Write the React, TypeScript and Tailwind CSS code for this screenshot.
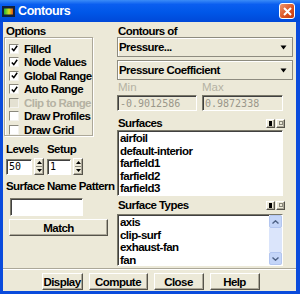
import React from 'react';

const sunken =
  'border border-t-[#7a7869] border-l-[#7a7869] border-b-white border-r-white shadow-[inset_1px_1px_0_#404040]';
const raised =
  'bg-[#ece9d8] border border-t-white border-l-white border-b-[#55534a] border-r-[#55534a] shadow-[inset_-1px_-1px_0_#aca899]';
const mono = "font-['DejaVu_Sans_Mono',monospace] font-normal tracking-normal text-[10px]";

function Check({ label, checked, disabled }: { label: string; checked?: boolean; disabled?: boolean }) {
  return (
    <div className="flex items-center h-[13.5px]">
      <span
        className={`w-[10px] h-[10px] flex items-center justify-center border border-t-[#8a887c] border-l-[#8a887c] border-b-[#f4f3ee] border-r-[#f4f3ee] ${
          disabled ? 'bg-[#e4e1d2]' : 'bg-white'
        }`}
      >
        {checked && (
          <svg width="7" height="7" viewBox="0 0 7 7">
            <path d="M0.8 3.4 L2.8 5.6 L6.2 0.8" stroke="#000" strokeWidth="1.5" fill="none" />
          </svg>
        )}
      </span>
      <span className={`ml-[5px] leading-[12px] ${disabled ? 'text-[#b5b2a3]' : ''}`}>{label}</span>
    </div>
  );
}

function Spinner() {
  return (
    <div className={`w-[10px] h-[17px] flex flex-col items-center justify-between py-[2px] ${raised}`}>
      <svg width="5" height="3" viewBox="0 0 5 3">
        <path d="M0 3 L2.5 0 L5 3 Z" fill="#000" />
      </svg>
      <span className="w-[6px] h-px bg-[#8a887c]" />
      <svg width="5" height="3" viewBox="0 0 5 3">
        <path d="M0 0 L2.5 3 L5 0 Z" fill="#000" />
      </svg>
    </div>
  );
}

function Dropdown({ value }: { value: string }) {
  return (
    <div className="h-[20px] flex items-center bg-[#ece9d8] border border-[#8d8b7f] shadow-[inset_1px_1px_0_#fff]">
      <span className="pl-[1px] flex-1 leading-[12px]">{value}</span>
      <svg width="7" height="6" viewBox="0 0 7 6" className="mr-[5px] mt-[2px]">
        <path d="M0.5 0.5 L6.5 0.5 L3.5 4.5 Z" fill="#000" />
      </svg>
    </div>
  );
}

function ListHeader({ label }: { label: string }) {
  return (
    <div className="flex items-center h-[12px] pl-[1px] pr-[8px]">
      <span className="flex-1 leading-[12px]">{label}</span>
      <span className={`w-[9px] h-[9px] flex items-center justify-center ${raised}`}>
        <span className="w-[3px] h-[5px] bg-black" />
      </span>
      <span className={`w-[9px] h-[9px] ml-[1px] flex items-center justify-center ${raised}`}>
        <span className="w-[4px] h-[4px] border border-[#8a887c]" />
      </span>
    </div>
  );
}

function ScrollButton({ up }: { up?: boolean }) {
  return (
    <div className="h-[13px] flex items-center justify-center bg-[#c4d5f8] border border-[#b3c6f0] rounded-[2px]">
      <svg width="7" height="4" viewBox="0 0 7 4">
        <path d={up ? 'M0.5 3.5 L3.5 0.8 L6.5 3.5' : 'M0.5 0.5 L3.5 3.2 L6.5 0.5'} stroke="#4d6185" strokeWidth="1.4" fill="none" />
      </svg>
    </div>
  );
}

function Button({ label, w }: { label: string; w: string }) {
  return <div className={`h-[17px] flex items-center justify-center leading-[12px] ${raised} ${w}`}>{label}</div>;
}

export default function App() {
  const surfaces = ['airfoil', 'default-interior', 'farfield1', 'farfield2', 'farfield3'];
  const types = ['axis', 'clip-surf', 'exhaust-fan', 'fan'];

  return (
    <div className="w-[300px] h-[294px] flex flex-col overflow-hidden bg-[#0a4bdc] font-['Liberation_Sans',Arial,sans-serif] font-bold text-[11.5px] tracking-[-0.55px] text-black select-none">
      {/* title bar */}
      <div className="h-[22px] flex items-center bg-[linear-gradient(#3b8cf7_0%,#0a5ef0_20%,#0057e8_55%,#0048d8_100%)]">
        <svg width="13" height="11" viewBox="0 0 13 11" className="ml-[2px]">
          <defs>
            <linearGradient id="cm" x1="0" x2="1" y1="0" y2="0">
              <stop offset="0" stopColor="#1fb33a" />
              <stop offset="0.55" stopColor="#d6e21b" />
              <stop offset="1" stopColor="#e0521a" />
            </linearGradient>
          </defs>
          <rect x="0" y="0" width="13" height="11" fill="#10203c" />
          <rect x="2" y="2.5" width="9" height="6" fill="url(#cm)" />
        </svg>
        <span className="ml-[3px] text-white text-[12.5px] tracking-[-0.4px] flex-1">Contours</span>
        <div className="w-[16px] h-[16px] mr-[5px] rounded-[3px] border border-white bg-[linear-gradient(135deg,#f0966e,#d9501f_60%,#c23a10)] flex items-center justify-center">
          <svg width="9" height="9" viewBox="0 0 9 9">
            <path d="M1 1 L8 8 M8 1 L1 8" stroke="#fff" strokeWidth="2" />
          </svg>
        </div>
      </div>

      {/* body */}
      <div className="flex-1 ml-[3px] mr-[4px] mb-[3px] bg-[#ece9d8] flex flex-col">
        <div className="h-[246px] flex">
          {/* left column */}
          <div className="w-[114px] pl-[1px] flex flex-col">
            <div className="pt-[3px] h-[15px] pl-[2px] leading-[12px]">Options</div>
            <div className="w-[89px] h-[99px] pt-[4px] pl-[4px] border border-[#aca899] shadow-[inset_1px_1px_0_#fff,1px_1px_0_#fff]">
              <Check label="Filled" checked />
              <Check label="Node Values" checked />
              <Check label="Global Range" checked />
              <Check label="Auto Range" checked />
              <Check label="Clip to Range" disabled />
              <Check label="Draw Profiles" />
              <Check label="Draw Grid" />
            </div>

            <div className="flex mt-[7px] pl-[2px]">
              <div className="flex flex-col w-[41px]">
                <span className="leading-[12px]">Levels</span>
                <div className="flex mt-[3px] items-center">
                  <div className={`w-[26px] h-[16px] bg-white flex items-center pl-[2px] ${sunken} ${mono}`}>50</div>
                  <div className="ml-[2px]">
                    <Spinner />
                  </div>
                </div>
              </div>
              <div className="flex flex-col">
                <span className="leading-[12px]">Setup</span>
                <div className="flex mt-[3px] items-center">
                  <div className={`w-[24px] h-[16px] bg-white flex items-center pl-[2px] ${sunken} ${mono}`}>1</div>
                  <div className="ml-[2px]">
                    <Spinner />
                  </div>
                </div>
              </div>
            </div>

            <div className="mt-[5px] pl-[2px] leading-[12px]">Surface Name Pattern</div>
            <div className={`mt-[6px] ml-[6px] w-[73px] h-[18px] bg-white ${sunken}`} />
            <Button label="Match" w="mt-[3px] ml-[5px] w-[99px]" />
          </div>

          {/* right column */}
          <div className="w-[176px] flex flex-col">
            <div className="pt-[3px] h-[15px] pl-[1px] leading-[12px]">Contours of</div>
            <Dropdown value="Pressure..." />
            <div className="mt-[3px]">
              <Dropdown value="Pressure Coefficient" />
            </div>
            <div className="flex mt-[1px] h-[13px] items-center text-[#b5b2a3] font-normal tracking-normal">
              <span className="w-[85px] pl-[1px]">Min</span>
              <span>Max</span>
            </div>
            <div className="flex mt-[1px]">
              <div className={`w-[80px] h-[16px] flex items-center pl-[2px] text-[#9a978a] ${sunken} ${mono}`}>-0.9012586</div>
              <div className={`ml-[5px] w-[81px] h-[16px] flex items-center pl-[2px] text-[#9a978a] ${sunken} ${mono}`}>0.9872338</div>
            </div>

            <div className="mt-[6px]">
              <ListHeader label="Surfaces" />
            </div>
            <div className={`mt-px w-[166px] h-[66px] bg-white pt-px pl-[2px] ${sunken}`}>
              {surfaces.map((s) => (
                <div key={s} className="h-[12.5px] leading-[12.5px]">
                  {s}
                </div>
              ))}
            </div>

            <div className="mt-[3px]">
              <ListHeader label="Surface Types" />
            </div>
            <div className={`mt-[3px] w-[166px] h-[52px] bg-white flex ${sunken}`}>
              <div className="flex-1 pl-[2px] pt-[1px]">
                {types.map((s) => (
                  <div key={s} className="h-[12.5px] leading-[12.5px]">
                    {s}
                  </div>
                ))}
              </div>
              <div className="w-[13px] flex flex-col bg-[#f4f3ef]">
                <ScrollButton up />
                <div className="flex-1 bg-[#dbe5fb]" />
                <ScrollButton />
              </div>
            </div>
          </div>
        </div>

        {/* separator */}
        <div className="h-px bg-[#aca899]" />
        <div className="h-px bg-white" />

        <div className="mt-[3px] flex justify-center gap-[6px] pl-[2px]">
          <Button label="Display" w="w-[41px]" />
          <Button label="Compute" w="w-[59px]" />
          <Button label="Close" w="w-[50px]" />
          <Button label="Help" w="w-[50px]" />
        </div>
      </div>
    </div>
  );
}
